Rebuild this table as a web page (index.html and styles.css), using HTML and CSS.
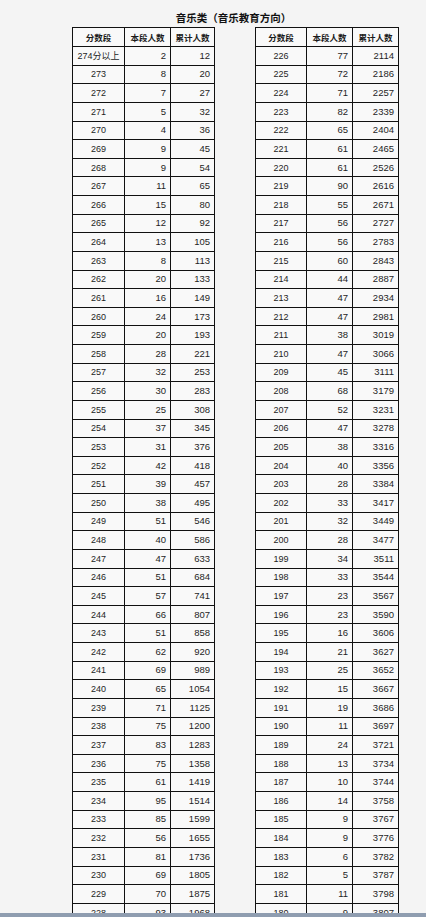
FILE: index.html
```html
<!DOCTYPE html>
<html lang="zh">
<head>
<meta charset="utf-8">
<title>音乐类（音乐教育方向）</title>
<link rel="stylesheet" href="styles.css">
</head>
<body>
<div class="page">
  <div class="sheet">
    <div class="title">音乐类（音乐教育方向）</div>
    <div class="tables">
      <table class="grid left">
        <thead><tr><th>分数段</th><th>本段人数</th><th>累计人数</th></tr></thead>
        <tbody id="lt"></tbody>
      </table>
      <table class="grid right">
        <thead><tr><th>分数段</th><th>本段人数</th><th>累计人数</th></tr></thead>
        <tbody id="rt"></tbody>
      </table>
    </div>
  </div>
  <div class="bar"></div>
</div>
<script src="script.js"></script>
</body>
</html>
```
FILE: script.js
```js
var L = [
["274分以上",2,12],["273",8,20],["272",7,27],["271",5,32],["270",4,36],["269",9,45],["268",9,54],["267",11,65],["266",15,80],["265",12,92],["264",13,105],["263",8,113],["262",20,133],["261",16,149],["260",24,173],["259",20,193],["258",28,221],["257",32,253],["256",30,283],["255",25,308],["254",37,345],["253",31,376],["252",42,418],["251",39,457],["250",38,495],["249",51,546],["248",40,586],["247",47,633],["246",51,684],["245",57,741],["244",66,807],["243",51,858],["242",62,920],["241",69,989],["240",65,1054],["239",71,1125],["238",75,1200],["237",83,1283],["236",75,1358],["235",61,1419],["234",95,1514],["233",85,1599],["232",56,1655],["231",81,1736],["230",69,1805],["229",70,1875],["228",93,1968]
];
var R = [
["226",77,2114],["225",72,2186],["224",71,2257],["223",82,2339],["222",65,2404],["221",61,2465],["220",61,2526],["219",90,2616],["218",55,2671],["217",56,2727],["216",56,2783],["215",60,2843],["214",44,2887],["213",47,2934],["212",47,2981],["211",38,3019],["210",47,3066],["209",45,3111],["208",68,3179],["207",52,3231],["206",47,3278],["205",38,3316],["204",40,3356],["203",28,3384],["202",33,3417],["201",32,3449],["200",28,3477],["199",34,3511],["198",33,3544],["197",23,3567],["196",23,3590],["195",16,3606],["194",21,3627],["193",25,3652],["192",15,3667],["191",19,3686],["190",11,3697],["189",24,3721],["188",13,3734],["187",10,3744],["186",14,3758],["185",9,3767],["184",9,3776],["183",6,3782],["182",5,3787],["181",11,3798],["180",9,3807]
];
function fill(id, data) {
  var tb = document.getElementById(id);
  var html = "";
  for (var i = 0; i < data.length; i++) {
    html += '<tr><td class="c">' + data[i][0] + '</td><td class="n">' + data[i][1] + '</td><td class="n">' + data[i][2] + '</td></tr>';
  }
  tb.innerHTML = html;
}
fill("lt", L);
fill("rt", R);
```
FILE: styles.css
```css
html, body {
  margin: 0;
  padding: 0;
}
body {
  width: 426px;
  height: 917px;
  overflow: hidden;
  background: #f4f4f4;
  font-family: "Liberation Sans", "Noto Sans CJK SC", sans-serif;
  color: #1e1e1e;
}
.page {
  height: 917px;
  display: flex;
  flex-direction: column;
}
.sheet {
  flex: 1;
  overflow: hidden;
  padding-left: 72px;
}
.title {
  width: 323px;
  height: 27px;
  box-sizing: border-box;
  padding-top: 11px;
  text-align: center;
  font-family: "Noto Sans CJK SC", sans-serif;
  font-weight: bold;
  font-size: 10.5px;
  line-height: 13px;
  color: #111;
}
.tables {
  display: flex;
  align-items: flex-start;
  gap: 40px;
}
.grid {
  border-collapse: collapse;
  table-layout: fixed;
  font-size: 9.5px;
}
.grid th, .grid td {
  border: 1px solid #111;
  padding: 0 4px;
  white-space: nowrap;
  overflow: hidden;
  background: #f9f9f9;
}
.grid th {
  height: 18px;
  font-family: "Noto Sans CJK SC", sans-serif;
  font-weight: bold;
  font-size: 8.5px;
  text-align: center;
  color: #1a1a1a;
}
.grid td {
  height: 17.63px;
  line-height: 10px;
  padding-top: 0;
  padding-bottom: 0;
}
.grid td.c {
  text-align: center;
  font-size: 9px;
  font-family: "Liberation Sans", "Noto Sans CJK SC", sans-serif;
}
.grid td.n {
  text-align: right;
}
.left th:nth-child(1), .left td:nth-child(1) { width: 43px; }
.left th:nth-child(2), .left td:nth-child(2) { width: 37px; }
.left th:nth-child(3), .left td:nth-child(3) { width: 35px; }
.right th:nth-child(1), .right td:nth-child(1) { width: 42px; }
.right th:nth-child(2), .right td:nth-child(2) { width: 37px; }
.right th:nth-child(3), .right td:nth-child(3) { width: 37px; }
.bar {
  height: 4px;
  flex: none;
  background: #8f9db0;
}
```
